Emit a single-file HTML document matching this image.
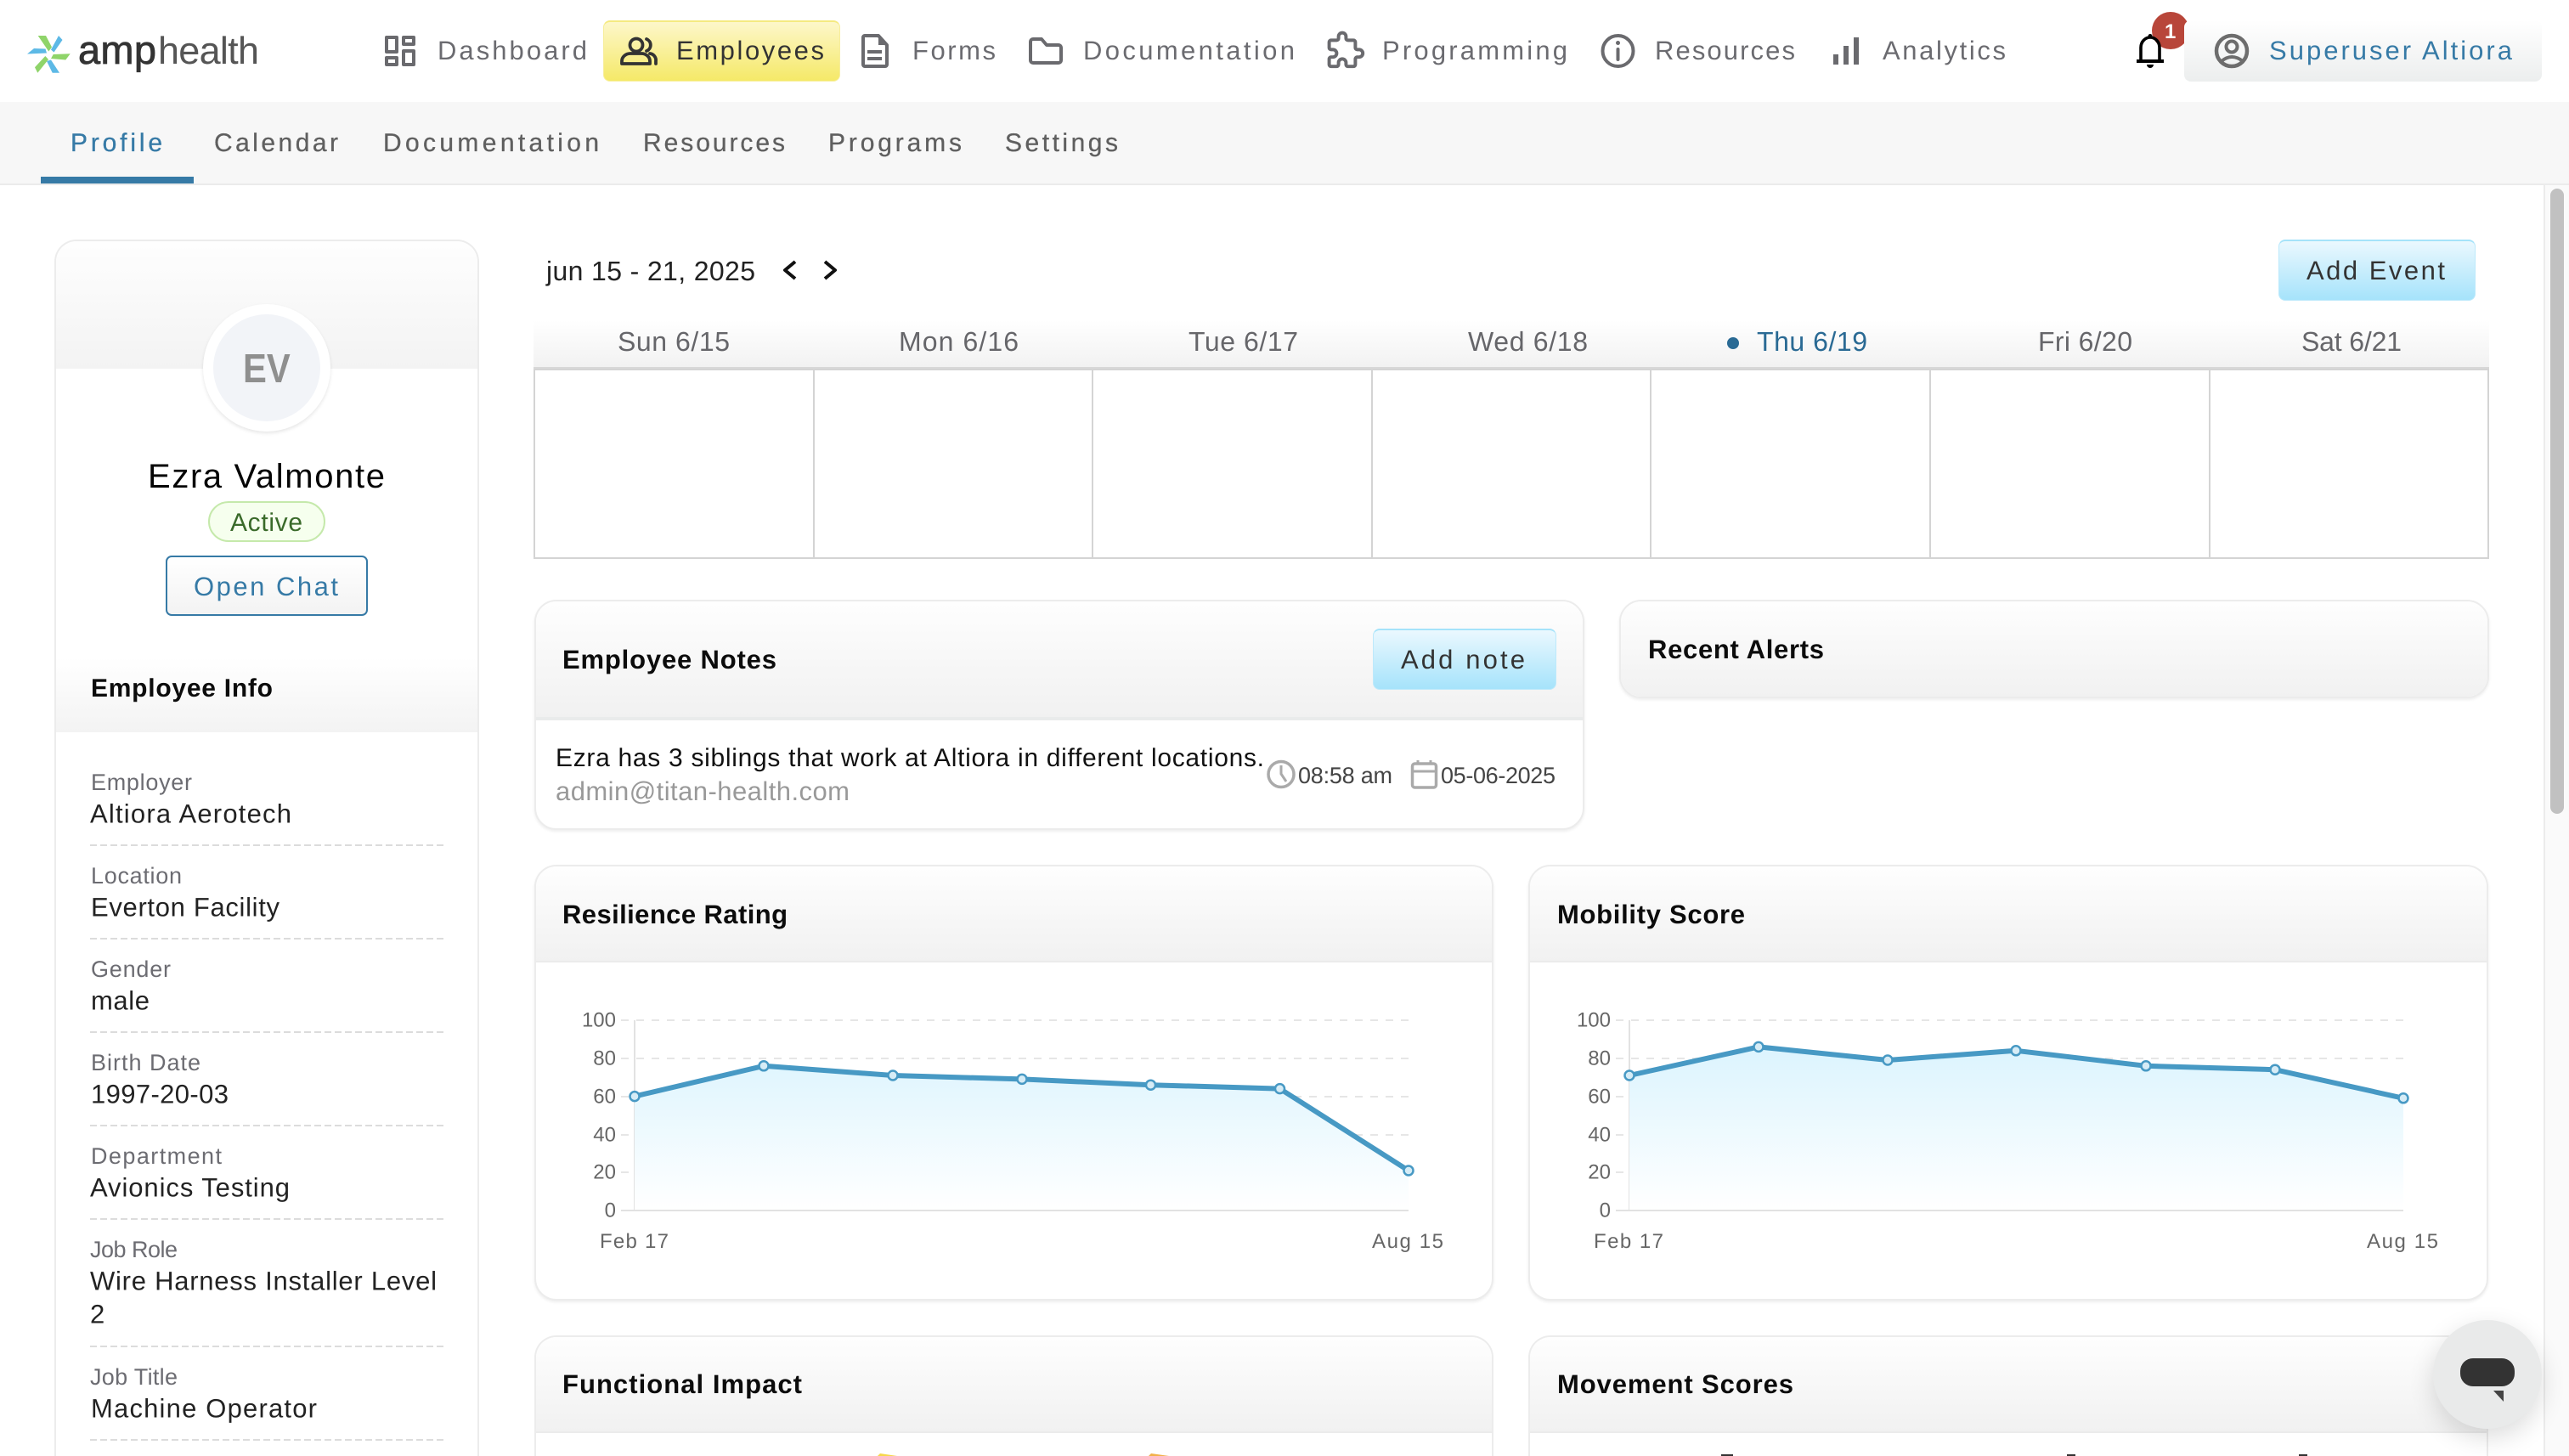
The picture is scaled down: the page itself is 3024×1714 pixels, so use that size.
<!DOCTYPE html>
<html lang="en">
<head>
<meta charset="utf-8">
<title>Ezra Valmonte – Employee Profile</title>
<style>
html,body{margin:0;padding:0;width:3024px;height:1714px;overflow:hidden;background:#fff;font-family:"Liberation Sans",sans-serif}
#page{position:relative;width:3024px;height:1714px;overflow:hidden;background:#fff}
.box{position:absolute;box-sizing:border-box}
.card{position:absolute;box-sizing:border-box;background:#fff;border:2px solid #ececec;border-radius:26px;overflow:hidden;box-shadow:0 2px 3px rgba(0,0,0,.07)}
.card.open{border-bottom:none;border-radius:26px 26px 0 0;box-shadow:none}
.head{position:absolute;left:0;right:0;top:0;background:linear-gradient(#fefefe,#f1f1f1);border-bottom:2px solid #ebebeb}
.bluebtn{position:absolute;box-sizing:border-box;background:linear-gradient(#ebf8fe,#a6e3fb);border:1px solid #bde9fb;border-top:2px solid #a5e3fa;border-radius:8px}
svg.over{position:absolute;left:0;top:0}
text{font-family:"Liberation Sans",sans-serif;text-rendering:geometricPrecision}
.n{font-size:31px;fill:#6b6b70}
.s{font-size:30px;fill:#5f5f5f;stroke:#5f5f5f;stroke-width:.3}
.d{font-size:32px;fill:#66666a}
.t{font-size:31px;font-weight:700;fill:#0c0c0c}
.l{font-size:27px;fill:#6c6c72}
.v{font-size:31px;fill:#222}
.a{font-size:24px;fill:#666}
.ic{fill:none;stroke:#6a6a6e;stroke-width:4;stroke-linejoin:round;stroke-linecap:round}
.grid{stroke:#e6e6e6;stroke-width:2;stroke-dasharray:9 9}
.dash{stroke:#dcdcdc;stroke-width:2;stroke-dasharray:8 4}
.ln{fill:none;stroke:#4799c4;stroke-width:6;stroke-linejoin:round}
.pt{fill:#d6ecf6;stroke:#4799c4;stroke-width:2.5}
</style>
</head>
<body>
<div id="page">

<!-- sub navigation -->
<div class="box" style="left:0;top:120px;width:3024px;height:98px;background:#f7f7f7;border-bottom:2px solid #ebebeb"></div>
<div class="box" style="left:48px;top:208px;width:180px;height:8px;background:#367aa6"></div>

<!-- main nav active and user pill -->
<div class="box" style="left:710px;top:24px;width:279px;height:72px;border-radius:8px;border:1px solid #f7ee9c;border-top:2px solid #f5ea80;background:linear-gradient(#fdf7ca,#f5e968)"></div>
<div class="box" style="left:2533px;top:14px;width:44px;height:44px;border-radius:50%;background:#b8463a"></div>
<div class="box" style="left:2571px;top:24px;width:421px;height:72px;border-radius:8px;background:linear-gradient(#fff,#eceeee)"></div>

<!-- scrollbar -->
<div class="box" style="left:2994px;top:218px;width:30px;height:1496px;background:#fafafa;border-left:2px solid #ececec"></div>
<div class="box" style="left:3002px;top:222px;width:16px;height:736px;background:#c1c1c1;border-radius:8px"></div>

<!-- left profile card -->
<div class="card open" style="left:64px;top:282px;width:500px;height:1432px">
  <div style="position:absolute;left:0;right:0;top:0;height:150px;background:linear-gradient(#fefefe,#f3f3f3)"></div>
  <div style="position:absolute;left:0;right:0;top:490px;height:88px;background:linear-gradient(#fff,#f3f3f3)"></div>
</div>
<div class="box" style="left:239px;top:358px;width:150px;height:150px;border-radius:50%;background:#fff;box-shadow:0 2px 4px rgba(0,0,0,.1)"></div>
<div class="box" style="left:251px;top:370px;width:126px;height:126px;border-radius:50%;background:#f2f4f8"></div>
<div class="box" style="left:245px;top:590px;width:138px;height:48px;border-radius:24px;background:#f6ffee;border:2px solid #c5e9ab"></div>
<div class="box" style="left:195px;top:654px;width:238px;height:71px;border-radius:7px;background:linear-gradient(#fff,#f3f3f3);border:2px solid #367aa6"></div>

<!-- calendar -->
<div class="box" style="left:628px;top:377px;width:2302px;height:58px;background:linear-gradient(#fff,#f2f2f2);border-bottom:3px solid #d8d8d8"></div>
<div class="box" style="left:628px;top:434px;width:2302px;height:224px;border:2px solid #d4d4d4"></div>
<div class="bluebtn" style="left:2682px;top:282px;width:232px;height:72px"></div>

<!-- notes -->
<div class="card" style="left:629px;top:706px;width:1236px;height:271px">
  <div class="head" style="height:136px;border-bottom:4px solid #e9ebeb"></div>
</div>
<div class="bluebtn" style="left:1616px;top:740px;width:216px;height:72px"></div>

<!-- alerts -->
<div class="card" style="left:1906px;top:706px;width:1024px;height:116px">
  <div class="head" style="height:112px;border-bottom:none"></div>
</div>

<!-- chart cards -->
<div class="card" style="left:629px;top:1018px;width:1129px;height:513px"><div class="head" style="height:111px"></div></div>
<div class="card" style="left:1799px;top:1018px;width:1130px;height:513px"><div class="head" style="height:111px"></div></div>
<div class="card open" style="left:629px;top:1572px;width:1129px;height:142px"><div class="head" style="height:111px"></div></div>
<div class="card open" style="left:1799px;top:1572px;width:1130px;height:142px"><div class="head" style="height:111px"></div></div>

<svg class="over" width="3024" height="1714" viewBox="0 0 3024 1714" xmlns="http://www.w3.org/2000/svg">
<defs>
<linearGradient id="ar" gradientUnits="userSpaceOnUse" x1="0" y1="1235" x2="0" y2="1425"><stop offset="0" stop-color="#dcf4fe"/><stop offset="1" stop-color="#ffffff"/></linearGradient>
</defs>

<!-- logo -->
<g fill="#5db9e6">
<polygon points="69,42 73.5,47 63.5,61.5 60,58.5"/>
<polygon points="32,63.5 40,57 53.5,57.5 55,62.5"/>
<polygon points="60,70.5 70,85.7 61.7,85.7 55,72"/>
</g>
<g fill="#8fd46a">
<polygon points="44.7,42 54,42 61,55.5 57.3,60.5"/>
<polygon points="62.7,64 82.7,63.3 77.3,70.5 60,69"/>
<polygon points="53.3,66 41,79.3 44.3,85.7 57,70"/>
</g>
<text x="92" y="75" font-size="47" fill="#333" stroke="#333" stroke-width=".8" textLength="92">amp</text>
<text x="186" y="75" font-size="45" fill="#555" textLength="119">health</text>

<!-- nav icons -->
<g class="ic" stroke-linecap="butt" stroke-linejoin="miter">
<rect x="455" y="44" width="12" height="17"/><rect x="475" y="44" width="12" height="8"/><rect x="455" y="68" width="12" height="8"/><rect x="475" y="60" width="12" height="16"/>
</g>
<g fill="none" stroke="#333" stroke-width="3.8" stroke-linecap="round" stroke-linejoin="round" transform="translate(-1,0)">
<circle cx="750" cy="53" r="7.5"/><path d="M733 75v-3a10 9 0 0 1 10-9h13a10 9 0 0 1 10 9v3z"/><path d="M762 46a7.5 7.5 0 0 1 0 14"/><path d="M766 63a8 8 0 0 1 7 9v3"/>
</g>
<path class="ic" d="M1016 44a2 2 0 0 1 2-2h16l10 11v23a2 2 0 0 1-2 2h-24a2 2 0 0 1-2-2z"/>
<path d="M1034 42l10 11h-10z" fill="#6a6a6e"/>
<path d="M1021 61h17M1021 69h17" stroke="#6a6a6e" stroke-width="4"/>
<path class="ic" d="M1213 49a3 3 0 0 1 3-3h10l6 7h14a3 3 0 0 1 3 3v15a3 3 0 0 1-3 3h-30a3 3 0 0 1-3-3z"/>
<g transform="translate(1558,32) scale(2.2)"><path fill="none" stroke="#6a6a6e" stroke-width="1.8" stroke-linejoin="round" d="M4 7h3a1 1 0 0 0 1 -1v-1a2 2 0 0 1 4 0v1a1 1 0 0 0 1 1h3a1 1 0 0 1 1 1v3a1 1 0 0 0 1 1h1a2 2 0 0 1 0 4h-1a1 1 0 0 0 -1 1v3a1 1 0 0 1 -1 1h-3a1 1 0 0 1 -1 -1v-1a2 2 0 0 0 -4 0v1a1 1 0 0 1 -1 1h-3a1 1 0 0 1 -1 -1v-3a1 1 0 0 1 1 -1h1a2 2 0 0 0 0 -4h-1a1 1 0 0 1 -1 -1v-3a1 1 0 0 1 1 -1"/></g>
<circle class="ic" cx="1904.5" cy="60" r="18"/>
<path d="M1904.5 58v12" stroke="#6a6a6e" stroke-width="4" stroke-linecap="round"/><circle cx="1904.5" cy="50.5" r="2.5" fill="#6a6a6e"/>
<g fill="#6a6a6e"><rect x="2158" y="64" width="6" height="12"/><rect x="2170" y="54" width="6" height="22"/><rect x="2182" y="44" width="6" height="32"/></g>

<!-- nav text -->
<text class="n" x="515" y="70" textLength="176">Dashboard</text>
<text class="n" x="796" y="70" textLength="174" style="fill:#333">Employees</text>
<text class="n" x="1074" y="70" textLength="98">Forms</text>
<text class="n" x="1275" y="70" textLength="249">Documentation</text>
<text class="n" x="1627" y="70" textLength="218">Programming</text>
<text class="n" x="1948" y="70" textLength="165">Resources</text>
<text class="n" x="2216" y="70" textLength="145">Analytics</text>

<!-- bell, badge digit, user -->
<g fill="none" stroke="#000" stroke-width="3.6"><path d="M2520 71V56a11 12 0 0 1 22 0v15"/></g>
<circle cx="2531" cy="42.5" r="2.500"/><rect x="2515" y="70" width="32" height="4"/><path d="M2527 76h8a4 4 0 0 1-8 0z"/>
<text x="2548" y="45" font-size="24" font-weight="700" fill="#fff">1</text>
<circle cx="2627" cy="60" r="18" fill="none" stroke="#6d6d6d" stroke-width="4.5"/>
<circle cx="2627" cy="55" r="6.5" fill="none" stroke="#6d6d6d" stroke-width="4"/>
<path d="M2615 72q12-10 25 0" fill="none" stroke="#6d6d6d" stroke-width="4"/>
<text class="n" x="2671" y="70" textLength="286" style="fill:#367aa6">Superuser Altiora</text>

<!-- subnav text -->
<text class="s" x="83" y="178" textLength="108" style="fill:#367aa6;stroke:#367aa6">Profile</text>
<text class="s" x="252" y="178" textLength="146">Calendar</text>
<text class="s" x="451" y="178" textLength="254">Documentation</text>
<text class="s" x="757" y="178" textLength="167">Resources</text>
<text class="s" x="975" y="178" textLength="157">Programs</text>
<text class="s" x="1183" y="178" textLength="133">Settings</text>

<!-- profile -->
<text transform="translate(286,450) scale(.87,1)" font-size="48" font-weight="700" fill="#8f8f8f">EV</text>
<text x="174" y="574" font-size="40" fill="#050505" textLength="279">Ezra Valmonte</text>
<text x="271" y="625" font-size="30" fill="#3a6a2a" textLength="85">Active</text>
<text x="228" y="701" font-size="31" fill="#367aa6" textLength="170">Open Chat</text>
<text x="107" y="820" class="t" style="font-size:30px" textLength="214">Employee Info</text>

<text class="l" x="107" y="930" textLength="119">Employer</text>
<text class="v" x="106" y="968.500" textLength="237">Altiora Aerotech</text>
<line class="dash" x1="106" y1="995" x2="522" y2="995"/>
<text class="l" x="107" y="1040" textLength="107">Location</text>
<text class="v" x="107" y="1078.500" textLength="222">Everton Facility</text>
<line class="dash" x1="106" y1="1105" x2="522" y2="1105"/>
<text class="l" x="107" y="1150" textLength="94">Gender</text>
<text class="v" x="107" y="1188.500" textLength="69">male</text>
<line class="dash" x1="106" y1="1215" x2="522" y2="1215"/>
<text class="l" x="107" y="1260" textLength="129">Birth Date</text>
<text class="v" x="107" y="1298.500" textLength="162">1997-20-03</text>
<line class="dash" x1="106" y1="1325" x2="522" y2="1325"/>
<text class="l" x="107" y="1370" textLength="154">Department</text>
<text class="v" x="106" y="1408.500" textLength="235">Avionics Testing</text>
<line class="dash" x1="106" y1="1435" x2="522" y2="1435"/>
<text class="l" x="106" y="1480" textLength="103">Job Role</text>
<text class="v" x="106" y="1518.500" textLength="408">Wire Harness Installer Level</text>
<text class="v" x="106" y="1557.500" textLength="16">2</text>
<line class="dash" x1="106" y1="1585" x2="522" y2="1585"/>
<text class="l" x="106" y="1630" textLength="103">Job Title</text>
<text class="v" x="107" y="1668.500" textLength="266">Machine Operator</text>
<line class="dash" x1="106" y1="1695" x2="522" y2="1695"/>

<!-- calendar header -->
<text x="643" y="330" font-size="32" fill="#222" textLength="246">jun 15 - 21, 2025</text>
<path d="M936 308l-12 10 12 10M971 308l12 10-12 10" fill="none" stroke="#111" stroke-width="4" stroke-linejoin="round"/>
<text x="2715" y="329" font-size="31" fill="#333" textLength="163">Add Event</text>
<text class="d" x="727" y="413" textLength="132">Sun 6/15</text>
<text class="d" x="1058" y="413" textLength="141">Mon 6/16</text>
<text class="d" x="1399" y="413" textLength="129">Tue 6/17</text>
<text class="d" x="1728" y="413" textLength="141">Wed 6/18</text>
<circle cx="2040" cy="404" r="7" fill="#2a6a94"/>
<text class="d" x="2068" y="413" textLength="130" style="fill:#2a6a94">Thu 6/19</text>
<text class="d" x="2399" y="413" textLength="111">Fri 6/20</text>
<text class="d" x="2709" y="413" textLength="118">Sat 6/21</text>
<g stroke="#d4d4d4" stroke-width="2">
<line x1="958" y1="435" x2="958" y2="657"/><line x1="1286" y1="435" x2="1286" y2="657"/><line x1="1615" y1="435" x2="1615" y2="657"/><line x1="1943" y1="435" x2="1943" y2="657"/><line x1="2272" y1="435" x2="2272" y2="657"/><line x1="2601" y1="435" x2="2601" y2="657"/>
</g>

<!-- notes -->
<text class="t" x="662" y="787" textLength="252">Employee Notes</text>
<text x="1649" y="787" font-size="31" fill="#333" textLength="146">Add note</text>
<text x="654" y="902" font-size="30" fill="#111" textLength="834">Ezra has 3 siblings that work at Altiora in different locations.</text>
<text x="654" y="942" font-size="31" fill="#999" textLength="346">admin@titan-health.com</text>
<circle cx="1508" cy="911.500" r="15" fill="none" stroke="#aaa" stroke-width="3.5"/>
<path d="M1508 901v10l6 9" fill="none" stroke="#aaa" stroke-width="3"/>
<text x="1528" y="922" font-size="27" fill="#444" textLength="111">08:58 am</text>
<rect x="1662.500" y="899" width="28" height="28" rx="3" fill="none" stroke="#aaa" stroke-width="3.500"/>
<path d="M1662 908h29M1669 895v5M1684 895v5" fill="none" stroke="#aaa" stroke-width="3"/>
<text x="1696" y="922" font-size="27" fill="#444" textLength="135">05-06-2025</text>

<!-- alerts -->
<text class="t" x="1940" y="775" textLength="207">Recent Alerts</text>

<!-- chart titles -->
<text class="t" x="662" y="1087" textLength="265">Resilience Rating</text>
<text class="t" x="1833" y="1087" textLength="221">Mobility Score</text>
<text class="t" x="662" y="1640" textLength="282">Functional Impact</text>
<text class="t" x="1833" y="1640" textLength="278">Movement Scores</text>

<!-- resilience chart -->
<g class="grid"><line x1="731" y1="1201" x2="1658" y2="1201"/><line x1="731" y1="1246" x2="1658" y2="1246"/><line x1="731" y1="1291" x2="1658" y2="1291"/><line x1="731" y1="1336" x2="1658" y2="1336"/><line x1="731" y1="1380" x2="1658" y2="1380"/></g>
<path d="M747 1201V1425" stroke="#e2e2e2" stroke-width="2"/>
<polygon fill="url(#ar)" points="747,1290.600 899,1254.800 1051,1266 1203,1270.400 1354.500,1277.200 1506.500,1281.600 1658,1378 1658,1425 747,1425"/>
<line x1="731" y1="1425" x2="1658" y2="1425" stroke="#e2e2e2" stroke-width="2"/>
<polyline class="ln" points="747,1290.600 899,1254.800 1051,1266 1203,1270.400 1354.500,1277.200 1506.500,1281.600 1658,1378"/>
<g class="pt"><circle cx="747" cy="1290.600" r="5.500"/><circle cx="899" cy="1254.800" r="5.500"/><circle cx="1051" cy="1266" r="5.500"/><circle cx="1203" cy="1270.400" r="5.500"/><circle cx="1354.500" cy="1277.200" r="5.500"/><circle cx="1506.500" cy="1281.600" r="5.500"/><circle cx="1658" cy="1378" r="5.500"/></g>
<g class="a" text-anchor="end">
<text x="725" y="1208.500">100</text><text x="725" y="1253.500">80</text><text x="725" y="1298.500">60</text><text x="725" y="1343.500">40</text><text x="725" y="1387.500">20</text><text x="725" y="1432.500">0</text>
</g>
<text class="a" x="706" y="1469" textLength="81">Feb 17</text>
<text class="a" x="1615" y="1469" textLength="84">Aug 15</text>

<!-- mobility chart -->
<g class="grid"><line x1="1902" y1="1201" x2="2829" y2="1201"/><line x1="1902" y1="1246" x2="2829" y2="1246"/><line x1="1902" y1="1291" x2="2829" y2="1291"/><line x1="1902" y1="1336" x2="2829" y2="1336"/><line x1="1902" y1="1380" x2="2829" y2="1380"/></g>
<path d="M1918 1201V1425" stroke="#e2e2e2" stroke-width="2"/>
<polygon fill="url(#ar)" points="1918,1266 2070,1232.400 2222,1248 2373,1236.800 2526,1254.800 2678,1259.200 2829,1292.800 2829,1425 1918,1425"/>
<line x1="1902" y1="1425" x2="2829" y2="1425" stroke="#e2e2e2" stroke-width="2"/>
<polyline class="ln" points="1918,1266 2070,1232.400 2222,1248 2373,1236.800 2526,1254.800 2678,1259.200 2829,1292.800"/>
<g class="pt"><circle cx="1918" cy="1266" r="5.500"/><circle cx="2070" cy="1232.400" r="5.500"/><circle cx="2222" cy="1248" r="5.500"/><circle cx="2373" cy="1236.800" r="5.500"/><circle cx="2526" cy="1254.800" r="5.500"/><circle cx="2678" cy="1259.200" r="5.500"/><circle cx="2829" cy="1292.800" r="5.500"/></g>
<g class="a" text-anchor="end">
<text x="1896" y="1208.500">100</text><text x="1896" y="1253.500">80</text><text x="1896" y="1298.500">60</text><text x="1896" y="1343.500">40</text><text x="1896" y="1387.500">20</text><text x="1896" y="1432.500">0</text>
</g>
<text class="a" x="1876" y="1469" textLength="82">Feb 17</text>
<text class="a" x="2786" y="1469" textLength="84">Aug 15</text>

<!-- peeks of the content below -->
<polygon points="1033,1714 1036,1711 1056,1714" fill="#f6d84a"/>
<polygon points="1352,1714 1355,1711 1376,1714" fill="#f2b14a"/>
<rect x="2026" y="1712" width="14" height="2" fill="#333"/>
<rect x="2433" y="1712" width="10" height="2" fill="#333"/>
<rect x="2706" y="1712" width="10" height="2" fill="#333"/>
</svg>

<!-- chat bubble -->
<div class="box" style="left:2864px;top:1554px;width:128px;height:128px;border-radius:50%;background:#e9eaea;box-shadow:0 10px 30px rgba(0,0,0,.14)"></div>
<div class="box" style="left:2896px;top:1599px;width:64px;height:33px;border-radius:15px;background:#333"></div>
<svg class="over" width="3024" height="1714" viewBox="0 0 3024 1714" xmlns="http://www.w3.org/2000/svg"><polygon points="2935,1637 2947,1637 2947,1650" fill="#444"/></svg>

</div>
</body>
</html>
